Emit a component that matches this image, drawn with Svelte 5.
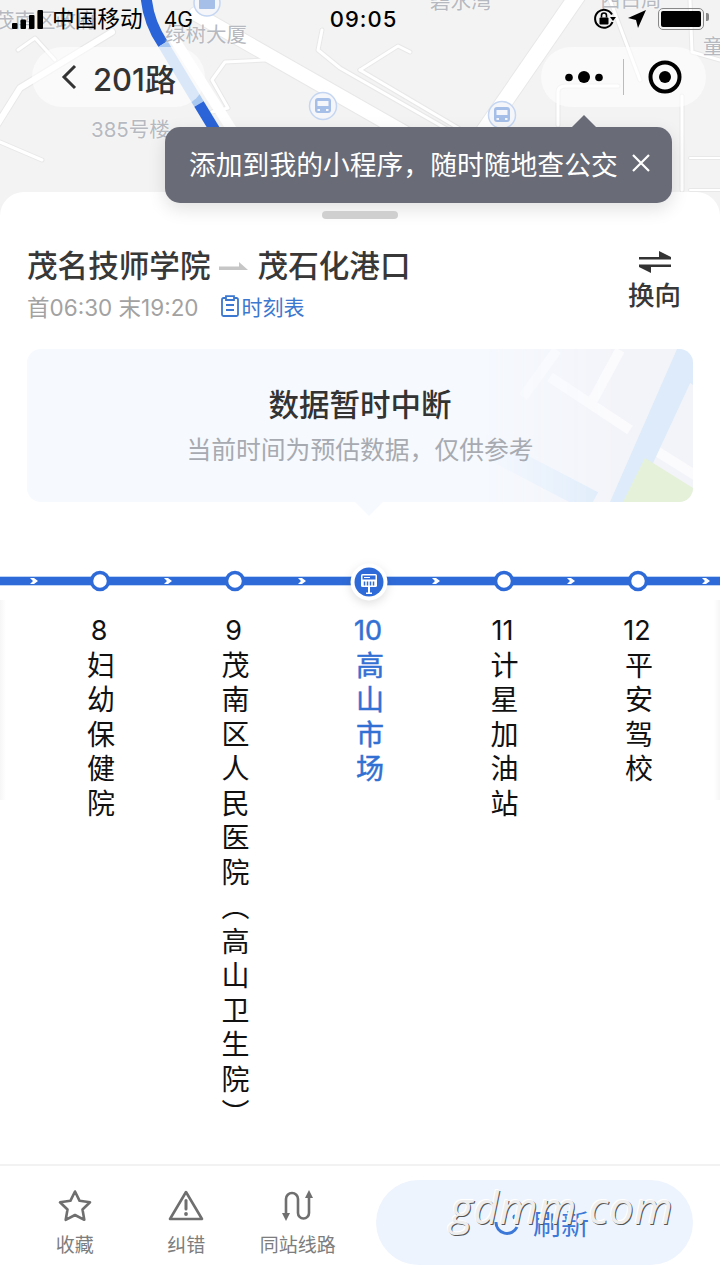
<script lang="ts">
	interface Stop {
		no: number;
		name: string;
		current?: boolean;
	}

	const stops: Stop[] = [
		{ no: 8, name: '妇幼保健院' },
		{ no: 9, name: '茂南区人民医院（高山卫生院）' },
		{ no: 10, name: '高山市场', current: true },
		{ no: 11, name: '计星加油站' },
		{ no: 12, name: '平安驾校' }
	];

	const stopX = [100, 235, 369, 504, 638];
	const chevronX = [34, 168, 302, 436, 571, 706];
</script>

<div class="page">
	<header class="map">
		<svg class="map-art" viewBox="0 0 720 220" width="720" height="220">
			<g fill="none" stroke-linecap="round" stroke-linejoin="round">
				<g stroke="#e8e8e8" stroke-width="8">
					<path d="M-5 128 L20 88 L112 32" />
					<path d="M18 50 L35 38 L55 60" stroke-width="5" />
					<path d="M0 142 L42 160" stroke-width="5" />
					<path d="M322 30 L318 50 L340 68 L480 148" stroke-width="5" />
					<path d="M196 14 L470 170" stroke-width="16" />
					<path d="M478 140 L580 -8" stroke-width="18" />
					<path d="M360 70 L398 46 L410 52" stroke-width="5" />
					<path d="M360 70 L470 135" stroke-width="5" />
					<path d="M360 105 L420 140" stroke-width="5" />
					<path d="M265 60 L225 62 L212 80 L228 108 L212 112" stroke-width="5" />
					<path d="M558 125 L558 92 Q558 86 566 86 L618 86" stroke-width="5" />
					<path d="M682 96 L682 190" stroke-width="5" />
					<path d="M690 158 L720 158 M690 190 L720 190" stroke-width="4" />
					<path d="M610 0 L640 80 M690 0 L692 52 L720 60" stroke-width="5" />
				</g>
				<g stroke="#fff" stroke-width="6">
					<path d="M-5 128 L20 88 L112 32" />
					<path d="M18 50 L35 38 L55 60" stroke-width="3" />
					<path d="M0 142 L42 160" stroke-width="3" />
					<path d="M322 30 L318 50 L340 68 L480 148" stroke-width="3" />
					<path d="M196 14 L470 170" stroke-width="14" />
					<path d="M478 140 L580 -8" stroke-width="16" />
					<path d="M360 70 L398 46 L410 52" stroke-width="3" />
					<path d="M360 70 L470 135" stroke-width="3" />
					<path d="M360 105 L420 140" stroke-width="3" />
					<path d="M265 60 L225 62 L212 80 L228 108 L212 112" stroke-width="3" />
					<path d="M558 125 L558 92 Q558 86 566 86 L618 86" stroke-width="3" />
					<path d="M682 96 L682 190" stroke-width="3" />
					<path d="M690 158 L720 158 M690 190 L720 190" stroke-width="2" />
					<path d="M610 0 L640 80 M690 0 L692 52 L720 60" stroke-width="3" />
				</g>
				<path d="M175 40 L232 130" stroke="#fff" stroke-width="10" />
				<path d="M146 -4 Q148 22 163 44" stroke="#2a64d8" stroke-width="11" stroke-linecap="butt" />
				<path d="M163 44 L199 104" stroke="#aac9f1" stroke-width="11" stroke-linecap="butt" />
				<path d="M199 104 L216 132" stroke="#2a64d8" stroke-width="11" stroke-linecap="butt" />
			</g>
			<g class="map-pin">
				<circle cx="207" cy="3" r="13" />
				<rect class="pin-body" x="199" y="-6" width="16" height="15" rx="1" />
			</g>
			<g class="map-pin">
				<circle cx="323" cy="106" r="13.5" />
				<rect class="pin-body" x="315" y="98" width="16" height="15" rx="3" />
				<rect class="pin-glass" x="317.5" y="101" width="11" height="5" />
				<rect class="pin-glass" x="317.5" y="109" width="2.5" height="2" />
				<rect class="pin-glass" x="326" y="109" width="2.5" height="2" />
			</g>
			<g class="map-pin">
				<circle cx="502" cy="115" r="13.5" />
				<rect class="pin-body" x="494" y="107" width="16" height="15" rx="3" />
				<rect class="pin-glass" x="496.5" y="110" width="11" height="5" />
				<rect class="pin-glass" x="496.5" y="118" width="2.5" height="2" />
				<rect class="pin-glass" x="505" y="118" width="2.5" height="2" />
			</g>
		</svg>
		<span class="map-label" style="left:165px;top:22px">绿树大厦</span>
		<span class="map-label" style="left:91px;top:117px">385号楼</span>
		<span class="map-label" style="left:430px;top:-11px">碧水湾</span>
		<span class="map-label" style="left:703px;top:34px">童</span>
		<span class="map-label" style="left:600px;top:-13px">西白周</span>
		<span class="map-label" style="left:-6px;top:8px">茂南区政府</span>

		<div class="status">
			<div class="status-left">
				<svg width="32" height="19" viewBox="0 0 32 19">
					<rect x="0" y="13" width="5.5" height="6" rx="1" />
					<rect x="8.5" y="9.5" width="5.5" height="9.5" rx="1" />
					<rect x="17" y="5" width="5.5" height="14" rx="1" />
					<rect x="25.5" y="0" width="5.5" height="19" rx="1" />
				</svg>
				<span class="carrier">中国移动</span>
				<span class="net">4G</span>
			</div>
			<span class="clock">09:05</span>
			<div class="status-right">
				<svg width="24" height="22" viewBox="0 0 24 22">
					<path d="M19 6.5 A9 9 0 1 0 19.5 14" fill="none" stroke="#000" stroke-width="2" />
					<path d="M17 9 L23 9 L20 13 Z" />
					<rect x="6.5" y="9.5" width="9" height="7" rx="1" />
					<path d="M8.5 9.5 V7.5 A2.5 2.5 0 0 1 13.5 7.5 V9.5" fill="none" stroke="#000" stroke-width="1.6" />
				</svg>
				<svg width="20" height="20" viewBox="0 0 20 20">
					<path d="M19 1 L11 19 L9 11 L1 9 Z" />
				</svg>
				<div class="battery"><i></i></div>
			</div>
		</div>

		<div class="nav">
			<div class="capsule back">
				<svg width="16" height="26" viewBox="0 0 16 26">
					<path d="M14 2 L3 13 L14 24" fill="none" stroke="#333" stroke-width="3" />
				</svg>
				<span>201路</span>
			</div>
			<div class="capsule menu">
				<svg width="38" height="14" viewBox="0 0 38 14">
					<circle cx="4" cy="7.5" r="3.8" />
					<circle cx="19" cy="7" r="6" />
					<circle cx="34" cy="7.5" r="3.8" />
				</svg>
				<i class="menu-sep"></i>
				<svg width="34" height="34" viewBox="0 0 34 34">
					<circle cx="17" cy="17" r="14.5" fill="none" stroke="#000" stroke-width="4" />
					<circle cx="17" cy="17" r="6" />
				</svg>
			</div>
		</div>
	</header>

	<div class="toast">
		<span>添加到我的小程序，随时随地查公交</span>
		<svg width="20" height="20" viewBox="0 0 20 20">
			<path d="M2 2 L18 18 M18 2 L2 18" stroke="#fff" stroke-width="2.2" fill="none" />
		</svg>
	</div>

	<main class="sheet">
		<div class="handle"></div>

		<section class="route">
			<div class="route-info">
				<div class="route-title">
					<span>茂名技师学院</span>
					<svg width="30" height="12" viewBox="0 0 30 12">
						<path d="M0 6.5 H22 V10 H0 Z M20 2 L29 10 H20 Z" fill="#c6c6c6" />
					</svg>
					<span>茂石化港口</span>
				</div>
				<div class="route-meta">
					<span class="hours">首06:30 末19:20</span>
					<span class="timetable">
						<svg width="18" height="22" viewBox="0 0 18 22">
							<path
								d="M5 3 H2.5 A1.5 1.5 0 0 0 1 4.5 V19.5 A1.5 1.5 0 0 0 2.5 21 H15.5 A1.5 1.5 0 0 0 17 19.5 V4.5 A1.5 1.5 0 0 0 15.5 3 H13 M5 1.2 H13 V5 H5 Z M5 10 H13 M5 15 H13"
								fill="none"
								stroke="#3c78d0"
								stroke-width="1.8"
							/>
						</svg>
						时刻表
					</span>
				</div>
			</div>
			<div class="swap">
				<svg width="34" height="22" viewBox="0 0 34 22">
					<path d="M1 6 H33 V8.5 H1 Z M21 0 L33 6 H21 Z M1 13.5 H33 V16 H1 Z M13 22 L1 16 H13 Z" fill="#333" />
				</svg>
				<span>换向</span>
			</div>
		</section>

		<section class="notice">
			<svg class="notice-map" viewBox="0 0 220 153" width="220" height="153">
				<rect width="220" height="153" fill="#f3f4f9" />
				<path d="M-20 80 L120 153" stroke="#deebfa" stroke-width="22" fill="none" />
				<g stroke="#fbfbfd" stroke-width="10" fill="none">
					<path d="M84 1 L50 48" />
					<path d="M147 1 L120 51" />
					<path d="M77 28 L157 81" />
					<path d="M177 98 L225 128" />
				</g>
				<path d="M204 0 H220 V28 L162 153 H137 Z" fill="#deebfa" />
				<path d="M207 26 L220 36 V19 L214 12 Z" fill="#deebfa" />
				<path d="M172 109 L220 139 V153 H150 Z" fill="#e5f1d8" />
			</svg>
			<h2>数据暂时中断</h2>
			<p>当前时间为预估数据，仅供参考</p>
		</section>
		<i class="notice-tip"></i>

		<svg class="line" width="720" height="60" viewBox="0 0 720 60">
			<rect x="0" y="26" width="720" height="10" fill="#bcd3f5" />
			<rect x="0" y="27" width="720" height="8" fill="#2f6bd8" />
			{#each chevronX as x}
				<path d="M{x - 4} 28 H{x} L{x + 4} 31 L{x} 34 H{x - 4} L{x - 1} 31 Z" fill="#fff" />
			{/each}
			{#each stopX as x, i}
				{#if stops[i].current}
					<circle cx={x} cy="32" r="18.5" fill="#fff" class="halo" />
					<circle cx={x} cy="32" r="14.5" fill="#2f6bd8" />
					<rect x={x - 8} y="24" width="16" height="13" rx="1.5" fill="#fff" />
					<rect x={x - 6.5} y="25.5" width="13" height="4" fill="#2f6bd8" />
					<rect x={x - 5} y="27" width="6" height="1" fill="#fff" />
					<path d="M{x - 4.5} 31.5 V35.5 M{x - 1.5} 31.5 V35.5 M{x + 1.5} 31.5 V35.5 M{x + 4.5} 31.5 V35.5" stroke="#2f6bd8" stroke-width="1.5" />
					<rect x={x - 1} y="37" width="2" height="6" fill="#fff" />
					<rect x={x - 3} y="42.5" width="6" height="1.5" fill="#fff" />
				{:else}
					<circle cx={x} cy="31" r="8.5" fill="#fff" stroke="#2f6bd8" stroke-width="3.5" />
				{/if}
			{/each}
		</svg>

		<ul class="stops">
			{#each stops as stop}
				<li class:current={stop.current}>
					<span class="no">{stop.no}</span>
					<span class="name">{stop.name}</span>
				</li>
			{/each}
		</ul>
		<i class="edge left"></i>
		<i class="edge right"></i>

		<footer class="bar">
			<div class="tool tool-fav">
				<svg width="36" height="34" viewBox="0 0 36 34">
					<path
						d="M18 2.5 L22.6 11.8 L33 13.3 L25.5 20.5 L27.3 30.8 L18 26 L8.7 30.8 L10.5 20.5 L3 13.3 L13.4 11.8 Z"
						fill="none"
						stroke="#6f6f6f"
						stroke-width="2.6"
						stroke-linejoin="round"
					/>
				</svg>
				<span>收藏</span>
			</div>
			<div class="tool tool-err">
				<svg width="36" height="34" viewBox="0 0 36 34">
					<path d="M18 3 L34 30 H2 Z" fill="none" stroke="#6f6f6f" stroke-width="2.6" stroke-linejoin="round" />
					<path d="M18 11.5 V20" stroke="#6f6f6f" stroke-width="3" stroke-linecap="round" />
					<circle cx="18" cy="25" r="1.9" fill="#6f6f6f" />
				</svg>
				<span>纠错</span>
			</div>
			<div class="tool tool-same">
				<svg width="36" height="34" viewBox="0 0 36 34">
					<path
						d="M6 28 V10 A6 6 0 0 1 18 10 V24 A5.5 5.5 0 0 0 29 24 V6"
						fill="none"
						stroke="#6f6f6f"
						stroke-width="2.6"
					/>
					<path d="M2 24 H10 L6 32 Z M25 9 H33 L29 1 Z" fill="#6f6f6f" />
				</svg>
				<span>同站线路</span>
			</div>
			<button class="refresh">
				<svg width="26" height="28" viewBox="0 0 26 28">
					<path d="M3 13 A11 11 0 0 0 24 18" fill="none" stroke="#3c78d8" stroke-width="3" />
					<path d="M12 1 V9" stroke="#3c78d8" stroke-width="3" />
					<circle cx="22" cy="8" r="2.5" fill="#3c78d8" />
				</svg>
				<span>刷新</span>
			</button>
		</footer>
		<span class="watermark">gdmm.com</span>
	</main>
</div>

<style>
	:global(body) {
		margin: 0;
		background: #fff;
	}

	.page {
		position: relative;
		width: 720px;
		height: 1280px;
		overflow: hidden;
		display: flex;
		flex-direction: column;
		font-family: Inter, 'Noto Sans CJK SC', sans-serif;
		color: #333;
	}

	i {
		display: block;
	}

	.map {
		position: relative;
		height: 220px;
		flex: none;
		background: #f3f3f3;
		overflow: hidden;
		display: flex;
		flex-direction: column;
	}

	.map-art {
		position: absolute;
		left: 0;
		top: 0;
	}

	.map-pin circle {
		fill: #f5f6fa;
		stroke: #c4d6f2;
		stroke-width: 1.5;
	}

	.pin-body {
		fill: #a5bfe8;
	}

	.pin-glass {
		fill: #f5f6fa;
	}

	.map-label {
		position: absolute;
		font-size: 20.5px;
		line-height: 26px;
		color: #b6b9c0;
		white-space: nowrap;
		text-shadow: 0 0 2px #fff;
	}

	.status {
		position: relative;
		height: 38px;
		flex: none;
		display: flex;
		align-items: center;
		justify-content: space-between;
		padding: 0 13px 0 12px;
		color: #000;
	}

	.status-left,
	.status-right {
		display: flex;
		align-items: center;
		width: 240px;
	}

	.status-right {
		justify-content: flex-end;
	}

	.status-left svg {
		margin-right: 8px;
	}

	.carrier {
		font-size: 22.7px;
		line-height: 28px;
	}

	.net {
		font-size: 21px;
		margin-left: 21px;
	}

	.clock {
		font-size: 22px;
		font-weight: 500;
		letter-spacing: 1px;
		transform: translateX(4px);
	}

	.status-right svg:first-child {
		margin-right: 10px;
	}

	.status-right svg:nth-child(2) {
		margin-right: 11px;
	}

	.battery {
		width: 40px;
		height: 16px;
		border: 1.5px solid #888;
		border-radius: 5px;
		padding: 2px;
		position: relative;
		margin-right: 3px;
	}

	.battery::after {
		content: '';
		position: absolute;
		right: -6px;
		top: 4px;
		width: 3px;
		height: 8px;
		background: #888;
		border-radius: 0 2px 2px 0;
	}

	.battery i {
		height: 100%;
		background: #000;
		border-radius: 2px;
	}

	.nav {
		position: relative;
		margin-top: 9px;
		padding: 0 14px 0 32px;
		display: flex;
		justify-content: space-between;
	}

	.capsule {
		height: 60px;
		border-radius: 30px;
		background: rgba(255, 255, 255, 0.55);
		display: flex;
		align-items: center;
		box-sizing: border-box;
	}

	.back {
		width: 173px;
		padding-left: 29px;
		gap: 16px;
		font-size: 31px;
		font-weight: 500;
		color: #333;
	}

	.menu {
		width: 165px;
		padding-left: 24px;
	}

	.menu-sep {
		width: 1px;
		height: 36px;
		background: #bbb;
		margin: 0 24px 0 20px;
	}

	.toast {
		position: absolute;
		left: 165px;
		top: 127px;
		width: 507px;
		height: 76px;
		box-sizing: border-box;
		padding: 0 21px 4px 24px;
		display: flex;
		align-items: center;
		justify-content: space-between;
		background: #696b76;
		border-radius: 15px;
		color: #fff;
		font-size: 26.8px;
		box-shadow: 0 6px 18px rgba(0, 0, 0, 0.12);
		z-index: 2;
	}

	.toast::before {
		content: '';
		position: absolute;
		left: 407px;
		top: -12px;
		border: 12px solid transparent;
		border-top: 0;
		border-bottom-color: #696b76;
	}

	.sheet {
		position: relative;
		flex: 1;
		margin-top: -28px;
		background: #fff;
		border-radius: 24px 24px 0 0;
		display: flex;
		flex-direction: column;
	}

	.handle {
		width: 76px;
		height: 8px;
		margin: 19px auto 0;
		border-radius: 4px;
		background: #cfcfcf;
		position: relative;
		z-index: 3;
	}

	.route {
		margin-top: 24px;
		padding: 0 39px 0 27px;
		display: flex;
		justify-content: space-between;
	}

	.route-title {
		display: flex;
		align-items: center;
		height: 42px;
		font-size: 30.6px;
		font-weight: 500;
		color: #383838;
	}

	.route-title svg {
		margin: 4px 9px 0 8px;
	}

	.route-meta {
		margin-top: 6px;
		height: 30px;
		display: flex;
		align-items: center;
		gap: 22px;
	}

	.hours {
		font-size: 22.5px;
		color: #a2a2a2;
	}

	.timetable {
		display: flex;
		align-items: center;
		gap: 3px;
		font-size: 21px;
		color: #3c78d0;
	}

	.swap {
		display: flex;
		flex-direction: column;
		align-items: center;
		margin-top: 8px;
		font-size: 26.5px;
		font-weight: 500;
		color: #383838;
	}

	.swap span {
		line-height: 38px;
		margin-top: 3px;
	}

	.notice {
		position: relative;
		margin: 28px 27px 0;
		height: 153px;
		border-radius: 14px;
		background: #f6f9fe;
		overflow: hidden;
		display: flex;
		flex-direction: column;
		align-items: center;
	}

	.notice-map {
		position: absolute;
		right: 0;
		top: 0;
		-webkit-mask-image: linear-gradient(to right, transparent 5%, #000 65%);
		mask-image: linear-gradient(to right, transparent 5%, #000 65%);
	}

	.notice h2 {
		position: relative;
		margin: 34px 0 0;
		font-size: 30.5px;
		line-height: 44px;
		font-weight: 500;
		color: #333;
	}

	.notice p {
		position: relative;
		margin: 2px 0 0;
		font-size: 24.8px;
		line-height: 42px;
		color: #a7aab0;
	}

	.notice-tip {
		width: 0;
		height: 0;
		margin: 0 auto;
		border: 14px solid transparent;
		border-bottom: 0;
		border-top-color: #f6f9fe;
		transform: translateX(9px);
	}

	.line {
		display: block;
		margin-top: 34px;
		flex: none;
	}

	.halo {
		filter: drop-shadow(0 3px 5px rgba(0, 0, 0, 0.12));
	}

	.stops {
		list-style: none;
		margin: 4px 0 0;
		padding: 0 0 0 16px;
		display: flex;
		justify-content: center;
		color: #111;
	}

	.stops li {
		width: 134.5px;
		flex: none;
		display: flex;
		flex-direction: column;
		align-items: center;
		font-size: 28px;
	}

	.no {
		height: 37px;
		line-height: 34px;
		font-size: 27px;
	}

	.name {
		writing-mode: vertical-rl;
		letter-spacing: 6.5px;
		line-height: 28px;
		font-size: 28px;
	}

	.current {
		color: #3370d3;
		-webkit-text-stroke: 0.5px #3370d3;
	}

	.edge {
		position: absolute;
		top: 408px;
		width: 6px;
		height: 200px;
	}

	.edge.left {
		left: 0;
		background: linear-gradient(to right, #f6f6f6, #fff);
	}

	.edge.right {
		right: 0;
		background: linear-gradient(to left, #f6f6f6, #fff);
	}

	.bar {
		position: relative;
		margin-top: auto;
		height: 116px;
		box-sizing: border-box;
		border-top: 2px solid #f2f2f2;
		padding: 14px 27px 0 0;
		display: flex;
		align-items: flex-start;
	}

	.tool {
		position: relative;
		display: flex;
		flex-direction: column;
		align-items: center;
		font-size: 19px;
		line-height: 30px;
		color: #7d7d7d;
		width: 111.5px;
		padding-top: 9px;
	}

	.tool svg {
		margin-bottom: 8px;
	}

	.tool-fav {
		margin-left: 19px;
	}

	.refresh {
		margin-left: auto;
		width: 317px;
		height: 85px;
		border: 0;
		border-radius: 43px;
		background: #eef4fd;
		color: #3c78d8;
		font-family: inherit;
		font-size: 28px;
		display: flex;
		align-items: center;
		justify-content: center;
		gap: 14px;
		padding: 0 0 0 13px;
	}

	.watermark {
		position: absolute;
		left: 450px;
		top: 985px;
		font-family: 'Open Sans', sans-serif;
		font-style: italic;
		font-size: 44px;
		line-height: 60px;
		letter-spacing: 0.5px;
		color: #eeeeee;
		text-shadow:
			1px 1px 0 #555,
			-1px -1px 0 #fff;
	}
</style>
